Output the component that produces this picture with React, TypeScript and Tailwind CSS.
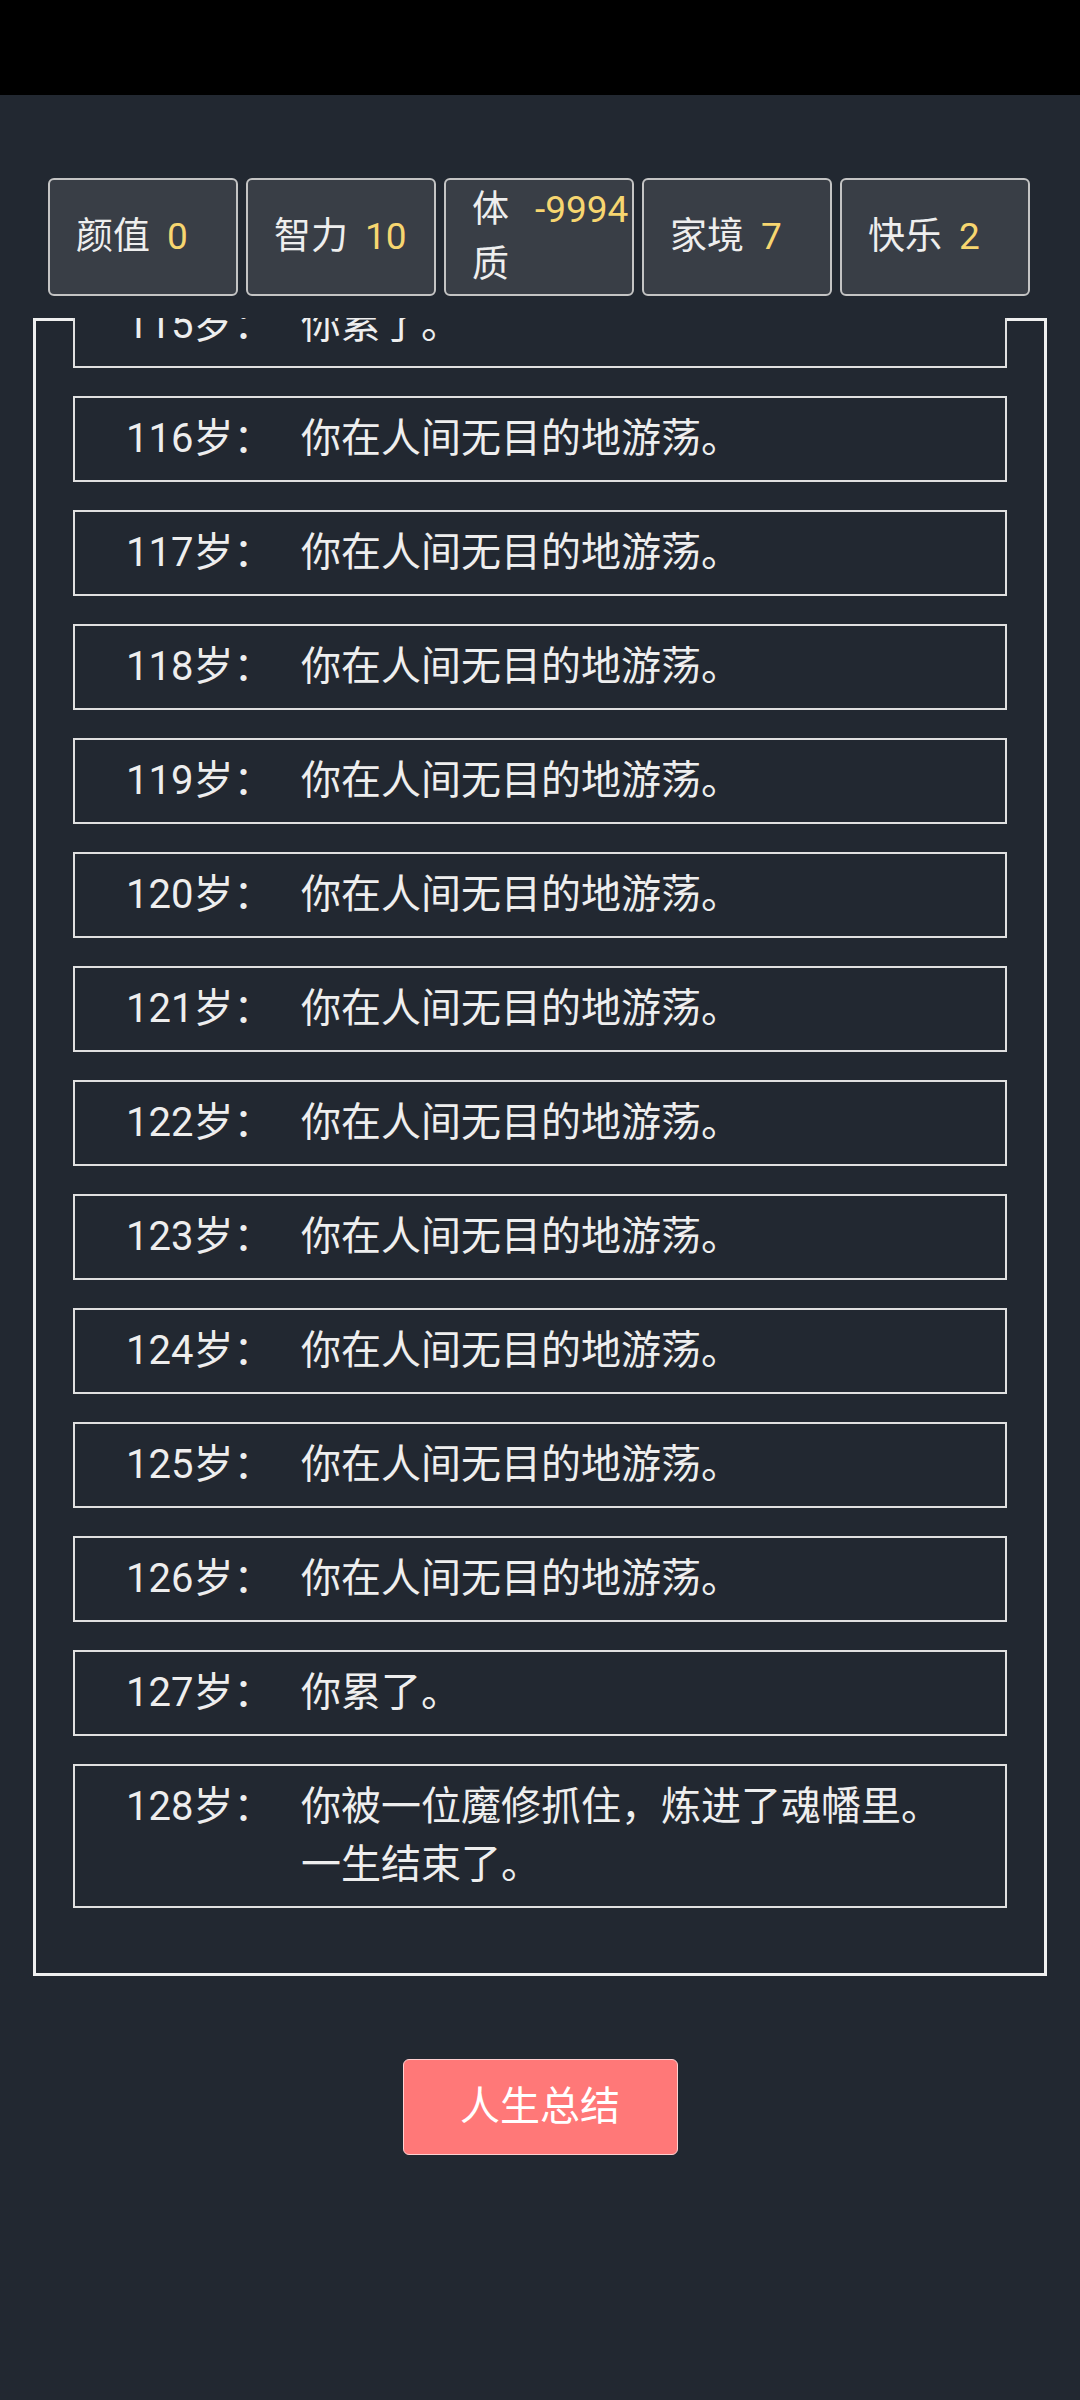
import React from 'react';

const stats = [
  { label: '颜值', value: '0' },
  { label: '智力', value: '10' },
  { label: '体质', value: '-9994', wide: true },
  { label: '家境', value: '7' },
  { label: '快乐', value: '2' },
];

const wander = '你在人间无目的地游荡。';

const events: { age: number; text: string[] }[] = [
  { age: 115, text: ['你累了。'] },
  ...Array.from({ length: 11 }, (_, i) => ({ age: 116 + i, text: [wander] })),
  { age: 127, text: ['你累了。'] },
  { age: 128, text: ['你被一位魔修抓住，炼进了魂幡里。', '一生结束了。'] },
];

const font = { fontFamily: 'Roboto, "Noto Sans CJK SC", sans-serif' };

export default function App() {
  return (
    <div className="min-h-[2400px] bg-[#222831] text-[#eeeeee]" style={font}>
      <div className="h-[95px] bg-black" />

      {/* attribute bar */}
      <div className="mt-[83px] flex gap-[8px] pl-[48px]">
        {stats.map((s) => (
          <div
            key={s.label}
            className="flex h-[118px] w-[190px] shrink-0 items-center rounded-[6px] border-2 border-[#c4c4c4] bg-[#393e46] px-[26px]"
          >
            <div className="flex items-baseline gap-[17px] text-[37px] leading-[1.5]">
              <span className="min-w-0">{s.label}</span>
              <span className={`shrink-0 text-[#f7d670] ${s.wide ? 'ml-[9px]' : ''}`}>
                {s.value}
              </span>
            </div>
          </div>
        ))}
      </div>

      {/* life trajectory, scrolled to the end */}
      <div className="mx-[33px] mt-[22px] border-[3px] border-[#efefef]">
        <div className="-mt-[3px] overflow-hidden">
          <div className="-mt-[36px] flex flex-col gap-[28px] px-[37px] pb-[65px]">
            {events.map((e) => (
              <div
                key={e.age}
                className="flex border-2 border-[#e0e0e0] bg-[#222831] py-[12px] pl-[51px] pr-[20px] text-[40px] leading-[58px]"
              >
                <span className="w-[175px] shrink-0">{e.age}岁：</span>
                <div className="flex flex-col">
                  {e.text.map((t) => (
                    <span key={t}>{t}</span>
                  ))}
                </div>
              </div>
            ))}
          </div>
        </div>
      </div>

      <div className="mt-[83px] flex justify-center">
        <button className="flex h-[96px] w-[275px] items-center justify-center rounded-[6px] border border-[#ffd0d0] bg-[#ff7878] text-[40px] text-white">
          人生总结
        </button>
      </div>
    </div>
  );
}
